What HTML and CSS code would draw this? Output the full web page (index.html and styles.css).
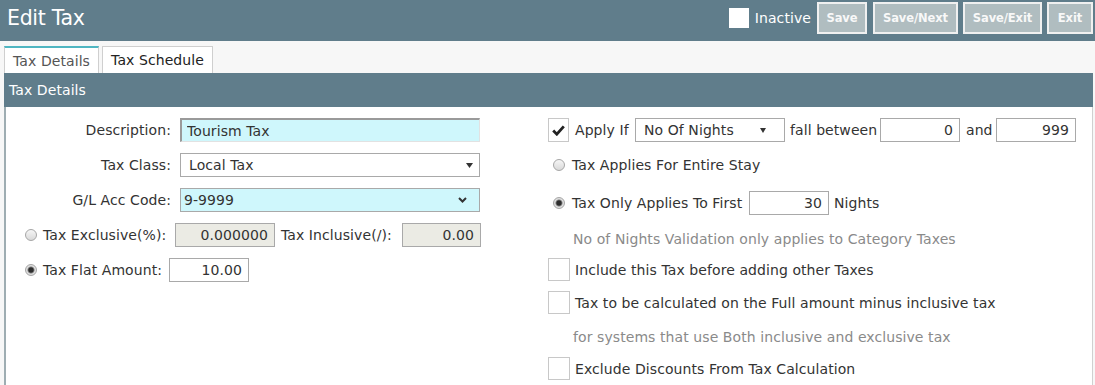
FILE: index.html
```html
<!DOCTYPE html>
<html lang="en">
<head>
<meta charset="utf-8">
<title>Edit Tax</title>
<link rel="stylesheet" href="styles.css">
</head>
<body>
<header class="topbar">
  <h1 class="title">Edit Tax</h1>
  <div class="actions">
    <span class="inactive-box"></span>
    <span class="inactive-label">Inactive</span>
    <button class="btn btn-save">Save</button>
    <button class="btn btn-next">Save/Next</button>
    <button class="btn btn-sexit">Save/Exit</button>
    <button class="btn btn-exit">Exit</button>
  </div>
</header>

<nav class="tabs">
  <div class="tab tab-details active">Tax Details</div>
  <div class="tab tab-schedule">Tax Schedule</div>
</nav>

<section class="panel">
  <div class="panel-head">Tax Details</div>
  <div class="panel-body">
    <div class="col-left">
      <div class="row">
        <label class="lbl">Description:</label>
        <input class="field field-cyan field-desc" type="text" value="Tourism Tax">
      </div>
      <div class="row">
        <label class="lbl">Tax Class:</label>
        <div class="select select-class">
          <span>Local Tax</span>
          <svg class="tri" width="7" height="5" viewBox="0 0 7 5"><path d="M0 0H7L3.5 5Z" fill="#333"/></svg>
        </div>
      </div>
      <div class="row">
        <label class="lbl">G/L Acc Code:</label>
        <div class="select select-gl">
          <span>9-9999</span>
          <svg class="chev" width="9" height="6" viewBox="0 0 9 6"><path d="M1 1L4.5 4.5L8 1" fill="none" stroke="#333" stroke-width="2"/></svg>
        </div>
      </div>
      <div class="row row-radio">
        <span class="radio"></span>
        <span class="txt t-excl">Tax Exclusive(%):</span>
        <input class="field field-num field-off w100" type="text" value="0.000000" readonly>
        <span class="txt t-incl">Tax Inclusive(/):</span>
        <input class="field field-num field-off w79" type="text" value="0.00" readonly>
      </div>
      <div class="row row-radio">
        <span class="radio on"></span>
        <span class="txt t-flat">Tax Flat Amount:</span>
        <input class="field field-num w80" type="text" value="10.00">
      </div>
    </div>

    <div class="col-right">
      <div class="rrow r1">
        <span class="check check-tall">
          <svg width="13" height="11" viewBox="0 0 13 11"><path d="M1.2 5.6L4.8 9.2L11.8 1.4" fill="none" stroke="#222" stroke-width="2.8"/></svg>
        </span>
        <span class="txt t-apply">Apply If</span>
        <div class="select select-nights">
          <span>No Of Nights</span>
          <svg class="tri" width="6" height="5" viewBox="0 0 6 5"><path d="M0 0H6L3 5Z" fill="#333"/></svg>
        </div>
        <span class="txt t-fall">fall between</span>
        <input class="field field-num w80" type="text" value="0">
        <span class="txt t-and">and</span>
        <input class="field field-num w80" type="text" value="999">
      </div>
      <div class="rrow r2">
        <span class="radio rradio"></span>
        <span class="txt">Tax Applies For Entire Stay</span>
      </div>
      <div class="rrow r3">
        <span class="radio rradio on"></span>
        <span class="txt t-first">Tax Only Applies To First</span>
        <input class="field field-num w80" type="text" value="30">
        <span class="txt ml5">Nights</span>
      </div>
      <div class="rrow r4 note">No of Nights Validation only applies to Category Taxes</div>
      <div class="rrow r5">
        <span class="check"></span>
        <span class="txt">Include this Tax before adding other Taxes</span>
      </div>
      <div class="rrow r6">
        <span class="check"></span>
        <span class="txt">Tax to be calculated on the Full amount minus inclusive tax</span>
      </div>
      <div class="rrow r7 note">for systems that use Both inclusive and exclusive tax</div>
      <div class="rrow r8">
        <span class="check"></span>
        <span class="txt">Exclude Discounts From Tax Calculation</span>
      </div>
    </div>
  </div>
</section>
</body>
</html>
```

FILE: styles.css
```css
* { box-sizing: border-box; }
html, body { margin: 0; padding: 0; }
body {
  width: 1095px;
  height: 385px;
  overflow: hidden;
  background: #f7f7f7;
  font-family: "DejaVu Sans", Verdana, sans-serif;
  font-size: 14px;
  letter-spacing: 0.08px;
  color: #333;
}

/* top bar */
.topbar {
  display: flex;
  align-items: flex-start;
  height: 41px;
  background: #607d8b;
  padding: 2px 2px 0 7px;
}
.title {
  margin: 0;
  font-size: 20.5px;
  font-weight: normal;
  color: #fff;
  line-height: 32px;
  letter-spacing: -0.3px;
}
.actions {
  margin-left: auto;
  display: flex;
  align-items: center;
  height: 32px;
}
.inactive-box {
  width: 20px;
  height: 20px;
  background: #fff;
  margin-right: 6px;
}
.inactive-label { color: #fff; margin-right: 6px; }
.btn {
  height: 32px;
  padding: 0;
  background: #b0bdc0;
  border: 2px solid #f0f0f0;
  color: #f8f8f8;
  font-family: inherit;
  font-size: 11.5px;
  font-weight: bold;
  letter-spacing: -0.1px;
}
.btn-save { width: 50px; }
.btn-next { width: 85px; margin-left: 6px; }
.btn-sexit { width: 79px; margin-left: 5px; }
.btn-exit { width: 46px; margin-left: 5px; }

/* tabs */
.tabs {
  display: flex;
  gap: 3px;
  margin: 5px 0 0 4px;
  height: 27px;
}
.tab {
  height: 27px;
  background: #fff;
  border: 1px solid #cfcfcf;
  border-bottom: none;
  text-align: center;
  padding-top: 1px;
  line-height: 24px;
  color: #222;
}
.tab-details { width: 95px; }
.tab-schedule { width: 111px; }
.tab.active {
  border-top: 2px solid #4fb6c2;
  color: #555;
}

/* panel */
.panel { margin: 0 2px 0 4px; }
.panel-head {
  height: 34px;
  line-height: 34px;
  background: #607d8b;
  color: #fff;
  padding-left: 5px;
}
.panel-body {
  display: flex;
  min-height: 290px;
  background: #fff;
  border-left: 2px solid #9eadb2;
  border-right: 1px solid #d0d0d0;
  padding-top: 11px;
}
.col-left { width: 542px; }
.col-right { flex: 1; }

.row {
  display: flex;
  align-items: center;
  height: 24px;
  margin-bottom: 11px;
}
.lbl {
  width: 165px;
  text-align: right;
  margin-right: 9px;
}
.row-radio { padding-left: 19px; }
.txt { white-space: nowrap; flex: none; }
.t-excl { width: 132px; }
.t-incl { width: 121px; margin-left: 6px; }
.t-flat { width: 126px; }
.t-apply { width: 60px; }
.t-fall { width: 90px; margin-left: 5px; }
.t-and { width: 36px; padding-left: 6px; }
.t-first { width: 177px; }

.field {
  flex: none;
  height: 24px;
  border: 1px solid #a9a9a9;
  background: #fff;
  font-family: inherit;
  font-size: 14px;
  letter-spacing: 0.08px;
  color: #333;
  padding: 0 6px;
  outline: none;
}
.field-num { text-align: right; }
.field-off { background: #ebebe4; }
.field-cyan { background: #cff7fc; }
.field-desc {
  width: 300px;
  border-top: 2px solid #9a9a9a;
  border-left: 2px solid #9a9a9a;
  border-right: 1px solid #e2e2e2;
  border-bottom: 1px solid #e2e2e2;
  padding-left: 5px;
}
.w100 { width: 100px; }
.w80 { width: 80px; }
.w79 { width: 79px; }
.ml5 { margin-left: 5px; }

.select {
  flex: none;
  display: flex;
  align-items: center;
  justify-content: space-between;
  height: 24px;
  border: 1px solid #a9a9a9;
  background: #fff;
  white-space: nowrap;
}
.select-class { width: 300px; padding: 0 6px 0 8px; }
.select-gl { width: 300px; padding: 0 12px 0 3px; background: #cff7fc; }
.select-nights { width: 150px; padding: 0 18px 0 8px; }

.radio {
  flex: none;
  width: 12px;
  height: 12px;
  border-radius: 50%;
  border: 1px solid #a6a6a6;
  background: linear-gradient(#f6f6f6, #d9d9d9);
  margin-right: 6px;
}
.radio.on {
  background: radial-gradient(circle, #2e2e2e 0 2.2px, #7a7a7a 3px, #e2e2e2 4px, #d6d6d6 6px);
}
.rradio { margin-left: 5px; margin-right: 7px; }

/* right column */
.rrow {
  display: flex;
  align-items: center;
  height: 24px;
}
.r2 { margin-top: 11px; }
.r3 { margin-top: 14px; }
.r4 { margin-top: 12px; }
.r5 { margin-top: 7px; height: 23px; }
.r6 { margin-top: 10px; height: 23px; }
.r7 { margin-top: 11px; }
.r8 { margin-top: 8px; height: 23px; }
.note { color: #8a8a8a; padding-left: 25px; }

.check {
  flex: none;
  display: flex;
  align-items: center;
  justify-content: center;
  width: 22px;
  height: 23px;
  border: 1px solid #c8c8c8;
  background: #fff;
  margin-right: 5px;
}
.check-tall { width: 21px; height: 24px; margin-right: 6px; }
```
